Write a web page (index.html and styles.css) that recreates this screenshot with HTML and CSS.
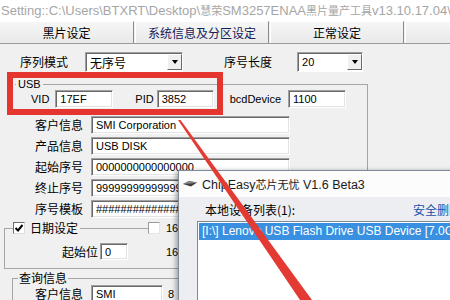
FILE: index.html
```html
<!DOCTYPE html>
<html lang="zh-CN">
<head>
  <meta charset="UTF-8" />
  <title>慧荣SM3257ENAA黑片量产工具</title>
  <link rel="stylesheet" href="styles.css">
</head>
<body>
<div class="screen">

  <div class="titlebar">Setting::C:\Users\BTXRT\Desktop\<span class="cjk">慧荣</span>SM3257ENAA<span class="cjk">黑片量产工具</span>v13.10.17.04\</div>

  <div class="tabs">
    <div class="tab">黑片设定</div>
    <div class="tab active">系统信息及分区设定</div>
    <div class="tab">正常设定</div>
    <div class="tab"></div>
  </div>

  <div class="panel">
    <div class="top-row">
      <span class="cap mode-cap">序列模式</span>
      <div class="combo mode-combo"><span>无序号</span><span class="drop"></span></div>
      <span class="cap len-cap">序号长度</span>
      <div class="combo len-combo"><span>20</span><span class="drop"></span></div>
    </div>

    <fieldset class="group usb-group">
      <legend>USB</legend>
      <div class="id-row">
        <span class="vid-cap">VID</span><input class="box vid" value="17EF">
        <span class="pid-cap">PID</span><input class="box pid" value="3852">
        <span class="bcd-cap">bcdDevice</span><input class="box bcd" value="1100">
      </div>
      <div class="fields">
        <div class="field"><span class="cap">客户信息</span><input class="box wide" value="SMI Corporation"></div>
        <div class="field"><span class="cap">产品信息</span><input class="box wide" value="USB DISK"></div>
        <div class="field"><span class="cap">起始序号</span><input class="box wide" value="0000000000000000"></div>
        <div class="field"><span class="cap">终止序号</span><input class="box wide" value="9999999999999999"></div>
        <div class="field"><span class="cap">序号模板</span><input class="box wide" value="################"></div>
      </div>
    </fieldset>

    <fieldset class="group date-group">
      <legend><span class="check"><svg width="10" height="10" viewBox="0 0 10 10"><polyline points="1.5,5 4,7.5 8.5,2" fill="none" stroke="#000" stroke-width="2"/></svg></span>日期设定</legend>
      <div class="tail"><span class="check light"></span><span>16</span></div>
      <div class="date-row">
        <span class="cap">起始位</span><input class="box start" value="0"><span class="num">16</span>
      </div>
    </fieldset>

    <fieldset class="group query-group">
      <legend>查询信息</legend>
      <div class="field">
        <span class="cap">客户信息</span><input class="box short" value="SMI"><span class="num">8</span>
      </div>
    </fieldset>
  </div>

  <div class="mark"></div>

  <div class="popup">
    <div class="popup-title">
      <svg width="14" height="8" viewBox="0 0 14 8">
        <polygon points="0,4 6,1 14,2.5 8,6.5" fill="#3c3c3c"/>
        <polygon points="0,4 6,1 14,2.5 8,3.5" fill="#8a8a8a"/>
      </svg>
      <span>ChipEasy<span class="cjk">芯片无忧</span> V1.6 Beta3</span>
    </div>
    <div class="popup-body">
      <div class="devices-head">
        <span>本地设备列表(1):</span>
        <span class="eject">安全删除</span>
      </div>
      <div class="device-list">
        <div class="device">[I:\] Lenovo USB Flash Drive USB Device [7.0GB]</div>
      </div>
    </div>
  </div>

  <svg class="arrow" width="450" height="300" viewBox="0 0 450 300">
    <polygon points="178,120 180.5,120 312,300 300,300" fill="#e33b34"/>
  </svg>

</div>
</body>
</html>
```

FILE: styles.css
```css
* {
  box-sizing: border-box;
}

body {
  margin: 0;
  font-family: "Liberation Sans", "Noto Sans CJK SC", sans-serif;
  font-size: 11px;
  color: #000;
}

.screen {
  position: relative;
  width: 450px;
  height: 300px;
  overflow: hidden;
  background: #f0f0f0;
}

.titlebar {
  height: 21px;
  padding-left: 1px;
  background: #fff;
  color: #a6a6a6;
  font-size: 13px;
  line-height: 21px;
  white-space: nowrap;
  overflow: hidden;
}

.titlebar .cjk {
  font-size: 11px;
}

/* tabs */
.tabs {
  display: flex;
  gap: 1px;
  height: 23px;
  border-bottom: 1px solid #9a9a9a;
}

.tab {
  flex: none;
  width: 134px;
  border-top: 1px solid #fff;
  border-left: 1px solid #fff;
  border-right: 1px solid #8a8a8a;
  background: linear-gradient(#f6f6f6, #e9e9e9);
  font-family: "Noto Sans CJK SC", sans-serif;
  font-size: 12px;
  line-height: 21px;
  text-align: center;
}

.tab:first-child {
  border-left: none;
}

.tab.active {
  color: #14205a;
}

/* form */
.panel {
  padding-top: 8px;
}

.cap {
  font-family: "Noto Sans CJK SC", sans-serif;
  font-size: 12px;
  line-height: 18px;
  white-space: nowrap;
}

.top-row {
  display: flex;
  align-items: center;
  height: 20px;
}

.mode-cap {
  margin-left: 20px;
}

.len-cap {
  margin-left: 41px;
}

.combo {
  display: flex;
  align-items: center;
  height: 20px;
  padding-left: 4px;
  background: #fff;
  border: 1px solid;
  border-color: #a0a0a0 #fff #fff #a0a0a0;
  box-shadow: inset 1px 1px 0 #696969;
  font-family: "Noto Sans CJK SC", sans-serif;
  font-size: 12px;
}

.mode-combo {
  width: 98px;
  margin-left: 17px;
}

.len-combo {
  width: 66px;
  margin-left: 25px;
  font-family: "Liberation Sans", sans-serif;
  font-size: 11px;
}

.drop {
  display: flex;
  align-items: center;
  justify-content: center;
  width: 15px;
  height: 16px;
  margin-left: auto;
  background: #f0f0f0;
  border: 1px solid;
  border-color: #fff #696969 #696969 #fff;
}

.drop::after {
  content: "";
  border: 3px solid transparent;
  border-top: 4px solid #000;
  border-bottom: 0;
}

.box {
  height: 18px;
  padding: 0 0 0 4px;
  background: #fff;
  border: 1px solid;
  border-color: #a0a0a0 #fff #fff #a0a0a0;
  box-shadow: inset 1px 1px 0 #696969, inset -1px -1px 0 #e3e3e3;
  font: 11px "Liberation Sans", sans-serif;
  color: #000;
  outline: none;
}

.group {
  margin: 0;
  padding: 0;
  min-width: 0;
  border: 1px solid #a5a5a5;
}

.group legend {
  padding: 0 2px;
}

.usb-group {
  width: 353px;
  margin: 6px 0 0 15px;
  padding: 0 0 1px 1px;
  border-left: none;
  border-bottom: none;
}

.usb-group legend {
  font-size: 11px;
  line-height: 12px;
}

.id-row {
  display: flex;
  align-items: center;
  height: 18px;
}

.vid-cap { margin-left: 15px; }
.vid { margin-left: 6px; width: 58px; }
.pid-cap { margin-left: 22px; }
.pid { margin-left: 3px; width: 57px; }
.bcd-cap { margin-left: 16px; }
.bcd { margin-left: 7px; width: 58px; }

.fields {
  display: flex;
  flex-direction: column;
  gap: 3px;
  margin-top: 8px;
}

.field {
  display: flex;
  align-items: center;
  height: 18px;
}

.field .cap {
  width: 67px;
  text-align: right;
}

.wide {
  width: 199px;
  margin-left: 8px;
}

.check {
  display: inline-flex;
  align-items: center;
  justify-content: center;
  width: 12px;
  height: 12px;
  background: #fff;
  border: 1px solid;
  border-color: #6d6d6d #dcdcdc #dcdcdc #6d6d6d;
}

.check.light {
  border-color: #9a9a9a #e6e6e6 #e6e6e6 #9a9a9a;
}

.date-group {
  width: 200px;
  margin: 2px 0 0 4px;
  padding: 0 0 8px 8px;
}

.date-group legend {
  display: flex;
  align-items: center;
  gap: 5px;
  padding: 0 2px 0 0;
  font-family: "Noto Sans CJK SC", sans-serif;
  font-size: 12px;
  line-height: 14px;
}

.tail {
  display: flex;
  align-items: center;
  gap: 6px;
  width: max-content;
  height: 12px;
  margin: -13px 0 0 135px;
  padding-right: 4px;
  background: #f0f0f0;
}

.date-row {
  display: flex;
  align-items: center;
  height: 17px;
  margin-top: 9px;
}

.date-row .cap {
  width: 85px;
  text-align: right;
}

.start {
  width: 28px;
  height: 17px;
  margin-left: 2px;
}

.date-row .num {
  margin-left: 38px;
}

.query-group {
  width: 200px;
  margin: 2px 0 0 12px;
  padding: 0 0 0 5px;
}

.query-group legend {
  padding: 0 1px;
  font-family: "Noto Sans CJK SC", sans-serif;
  font-size: 12px;
  line-height: 14px;
}

.query-group .cap {
  width: 65px;
}

.short {
  width: 72px;
  margin-left: 8px;
}

.query-group .num {
  margin-left: 5px;
}

/* annotations over the screenshot */
.mark {
  position: absolute;
  left: 7px;
  top: 72px;
  width: 216px;
  height: 43px;
  border: 6px solid #e5352f;
}

.arrow {
  position: absolute;
  left: 0;
  top: 0;
  pointer-events: none;
}

/* ChipEasy window */
.popup {
  position: absolute;
  left: 178px;
  top: 170px;
  width: 290px;
  height: 140px;
  background: #eceef2;
  border: 1px solid #7f8b99;
  box-shadow: -2px 1px 5px rgba(0, 0, 0, 0.35);
}

.popup-title {
  display: flex;
  align-items: center;
  gap: 5px;
  height: 26px;
  padding-left: 4px;
  background: #fcfcfc;
  color: #1b1b1b;
  font-size: 12.5px;
  white-space: nowrap;
}

.popup-title .cjk {
  font-size: 11px;
}

.popup-body {
  padding: 4px 6px 0 18px;
}

.devices-head {
  display: flex;
  margin-bottom: 2px;
  padding-left: 8px;
  font-family: "Noto Sans CJK SC", sans-serif;
  font-size: 12px;
  line-height: 18px;
}

.eject {
  margin-left: auto;
  color: #1b4fa8;
}

.device-list {
  height: 100px;
  padding: 1px;
  background: #fff;
  border: 1px solid #828790;
}

.device {
  height: 17px;
  padding-left: 3px;
  background: #3990e0;
  color: #fff;
  font-size: 12px;
  line-height: 17px;
  white-space: nowrap;
  overflow: hidden;
}
```
